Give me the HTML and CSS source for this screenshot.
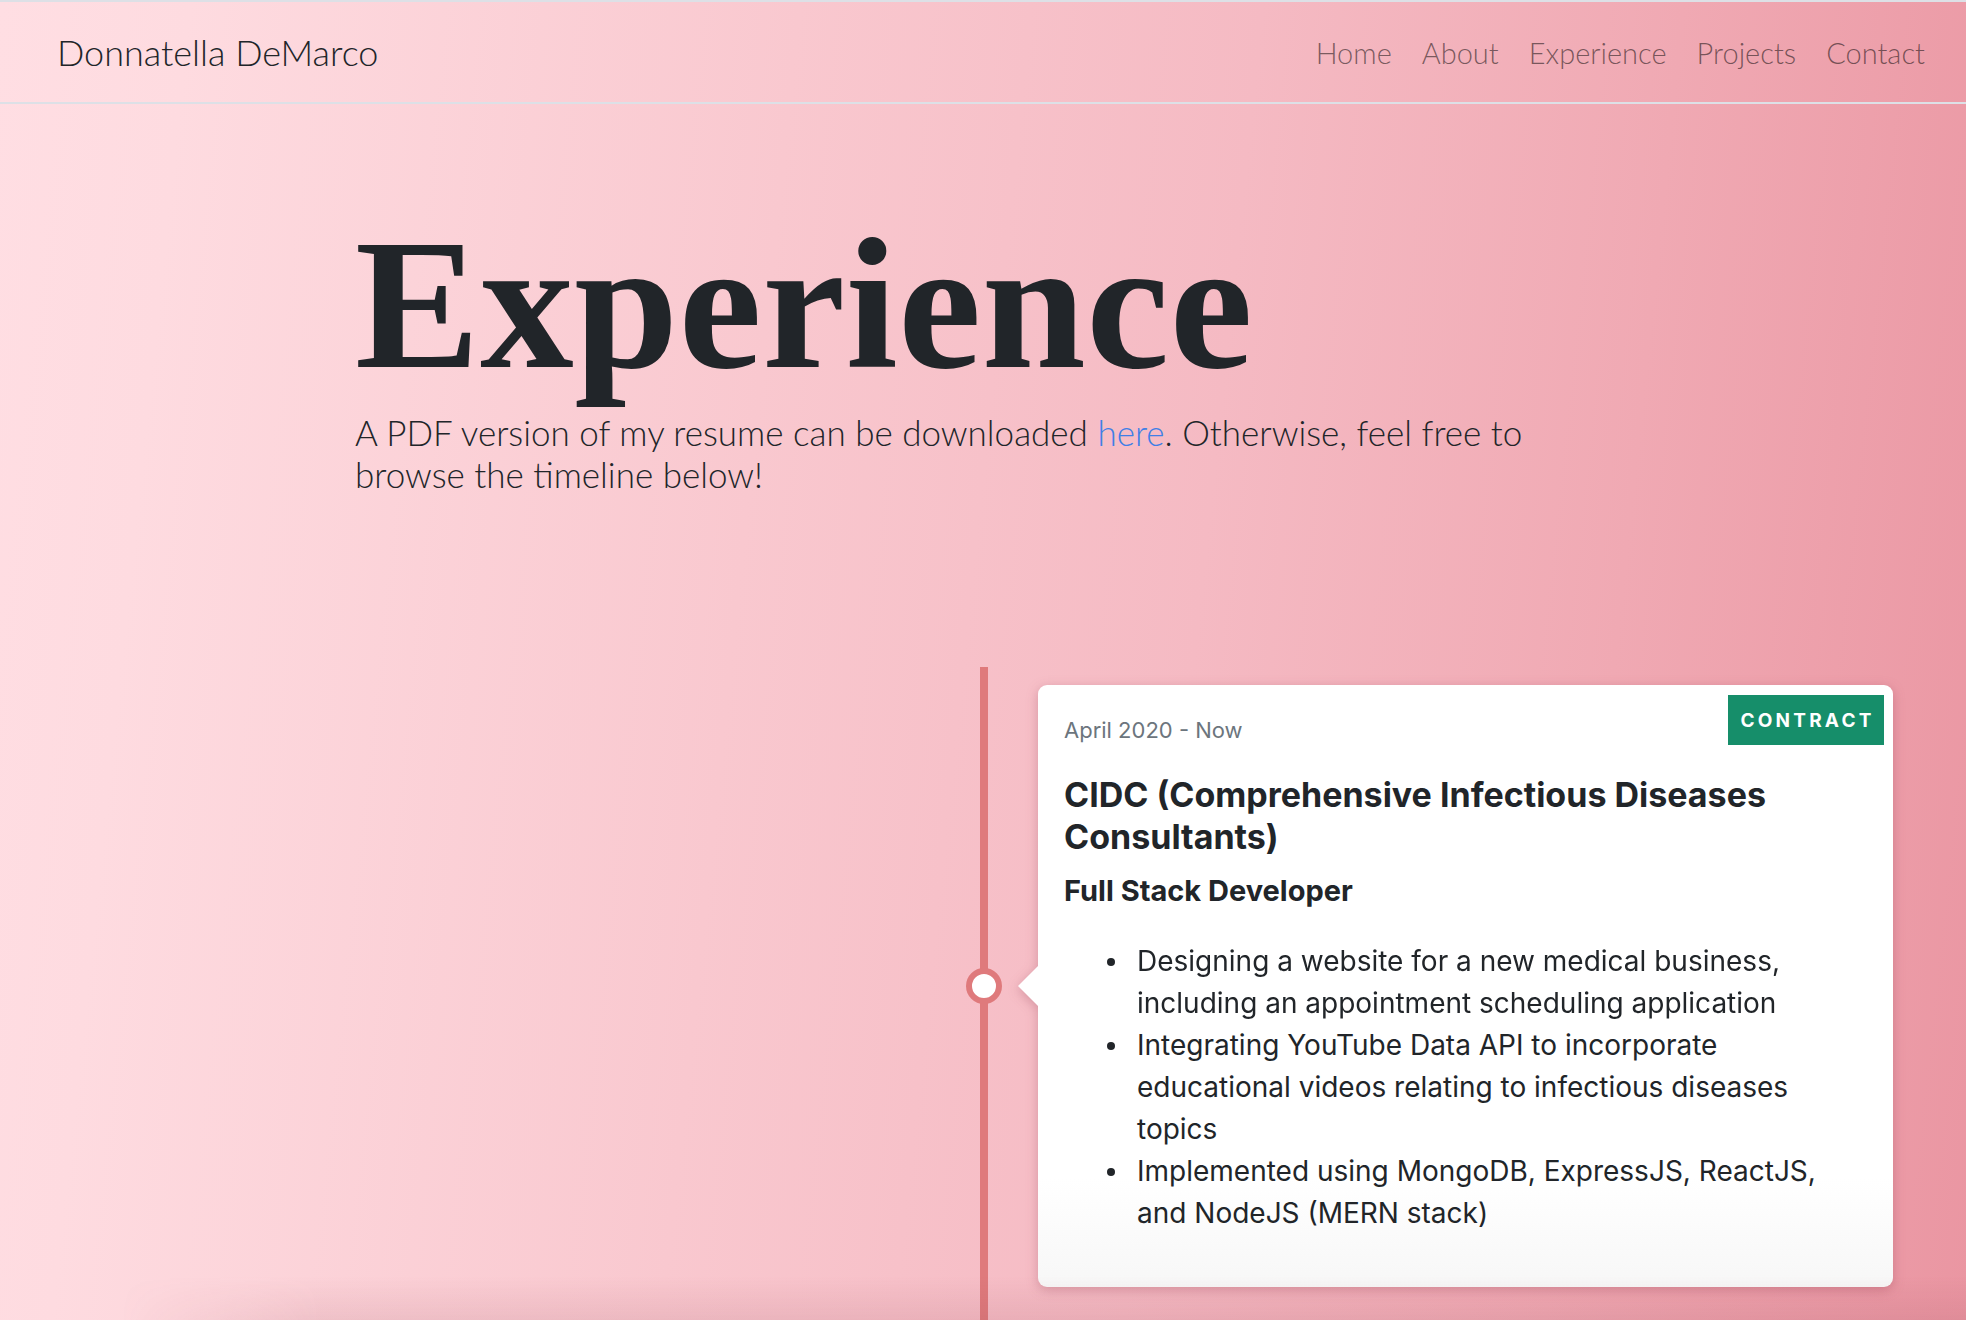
FILE: index.html
```
<!DOCTYPE html>
<html lang="en">
<head>
<meta charset="utf-8">
<title>Experience — Donnatella DeMarco</title>
<link rel="stylesheet" href="styles.css">
</head>
<body>
<header class="topbar">
  <a class="brand" href="#">Donnatella DeMarco</a>
  <nav class="nav">
    <a href="#">Home</a>
    <a href="#">About</a>
    <a href="#">Experience</a>
    <a href="#">Projects</a>
    <a href="#">Contact</a>
  </nav>
</header>
<main class="page">
  <section class="intro">
    <h1 class="title">Experience</h1>
    <p class="lead"><span>A PDF version of my resume can be downloaded </span><a class="link" href="#">here</a><span>. Otherwise, feel free to</span> <span>browse the timeline below!</span></p>
  </section>
  <section class="timeline">
    <div class="tl-item">
      <div class="tl-spacer"></div>
      <div class="tl-body">
        <span class="tl-marker"></span>
        <article class="card">
          <span class="badge">CONTRACT</span>
          <div class="date">April 2020 - Now</div>
          <h3 class="company">CIDC (Comprehensive Infectious Diseases Consultants)</h3>
          <h4 class="role">Full Stack Developer</h4>
          <ul class="duties">
            <li>Designing a website for a new medical business, including an appointment scheduling application</li>
            <li>Integrating YouTube Data API to incorporate educational videos relating to infectious diseases topics</li>
            <li>Implemented using MongoDB, ExpressJS, ReactJS, and NodeJS (MERN stack)</li>
          </ul>
        </article>
      </div>
    </div>
  </section>
  <div class="bottom-shade"></div>
</main>
</body>
</html>
```
FILE: styles.css
```
* { box-sizing: border-box; }

html, body {
  margin: 0;
  padding: 0;
}

body {
  min-height: 100vh;
  font-family: Lato, "Liberation Sans", sans-serif;
  color: #212529;
  background: linear-gradient(96deg, #ffdee3 0%, #fedbe0 9%, #f9c8cf 38%, #f5bac3 60%, #f0a9b3 80%, #ea96a2 100%);
  background-attachment: fixed;
}

.topbar {
  height: 104px;
  border-top: 2px solid #dde0e6;
  border-bottom: 2px solid #dde0e6;
  display: flex;
  align-items: center;
  justify-content: space-between;
  padding: 0 41px 0 57px;
}

.brand {
  font-family: Lato, sans-serif;
  font-weight: 300;
  font-size: 36px;
  color: #212529;
  text-decoration: none;
}

.nav {
  display: flex;
  gap: 30px;
}

.nav a {
  font-family: Lato, sans-serif;
  font-weight: 300;
  font-size: 29px;
  color: rgba(0, 0, 0, 0.52);
  text-decoration: none;
}

.intro {
  width: 1256px;
  margin: 0 auto;
  padding-top: 92px;
}

.title {
  margin: 0;
  font-family: "Liberation Serif", "Times New Roman", serif;
  font-weight: 700;
  font-size: 187px;
  line-height: 1.15;
  letter-spacing: 0.5px;
  color: #212529;
}

.lead {
  margin: 0;
  font-family: Lato, sans-serif;
  font-weight: 300;
  font-size: 35px;
  line-height: 42px;
  color: #212529;
}

.link {
  color: #3f7fe6;
  text-decoration: none;
}

.timeline {
  position: relative;
  width: 1820px;
  margin: 172px auto 0;
  padding: 18px 0 80px;
}

.timeline::before {
  content: "";
  position: absolute;
  top: 0;
  bottom: 0;
  left: calc(50% - 3px);
  width: 8px;
  background: #df7a7c;
}

.tl-item {
  display: grid;
  grid-template-columns: 1fr 1fr;
}

.tl-body {
  position: relative;
  padding-left: 55px;
}

.tl-marker {
  position: absolute;
  left: -17px;
  top: calc(50% - 18px);
  width: 36px;
  height: 36px;
  border-radius: 50%;
  background: #fff;
  border: 6px solid #df7a7c;
  z-index: 2;
}

.card {
  position: relative;
  background: linear-gradient(to bottom, #ffffff 82%, #f7f7f7 100%);
  border-radius: 9px;
  padding: 30px 26px 26px 26px;
  font-family: Inter, "Noto Sans", sans-serif;
  color: #212529;
  filter: drop-shadow(0 3px 6px rgba(130, 40, 60, 0.28));
}

.card::before {
  content: "";
  position: absolute;
  left: -20px;
  top: calc(50% - 20px);
  border-top: 20px solid transparent;
  border-bottom: 20px solid transparent;
  border-right: 20px solid #fff;
}

.badge {
  position: absolute;
  top: 10px;
  right: 9px;
  width: 156px;
  height: 50px;
  display: flex;
  align-items: center;
  justify-content: center;
  background: #168e6a;
  color: #fff;
  font-family: Inter, sans-serif;
  font-weight: 700;
  font-size: 19px;
  letter-spacing: 3.2px;
  padding-left: 3px;
}

.date {
  font-size: 22px;
  line-height: 30px;
  color: #6c757d;
}

.company {
  margin: 28.5px 0 0;
  font-size: 34px;
  line-height: 42px;
  font-weight: 700;
  padding-right: 60px;
}

.role {
  margin: 17.5px 0 0;
  font-size: 29px;
  line-height: 32px;
  font-weight: 700;
}

.duties {
  margin: 33px 0 27px;
  padding: 0 40px 0 73px;
  font-size: 28px;
  line-height: 42px;
  list-style: none;
}

.duties li {
  position: relative;
}

.duties li::before {
  content: "";
  position: absolute;
  left: -30px;
  top: 18px;
  width: 8px;
  height: 8px;
  border-radius: 50%;
  background: #212529;
}

.bottom-shade {
  position: fixed;
  left: 0;
  right: 0;
  bottom: 0;
  height: 44px;
  pointer-events: none;
  background: linear-gradient(to bottom, rgba(150, 70, 85, 0) 0%, rgba(150, 70, 85, 0.12) 100%);
  -webkit-mask-image: linear-gradient(to right, transparent 120px, #000 320px);
  mask-image: linear-gradient(to right, transparent 120px, #000 320px);
  z-index: 5;
}
```
